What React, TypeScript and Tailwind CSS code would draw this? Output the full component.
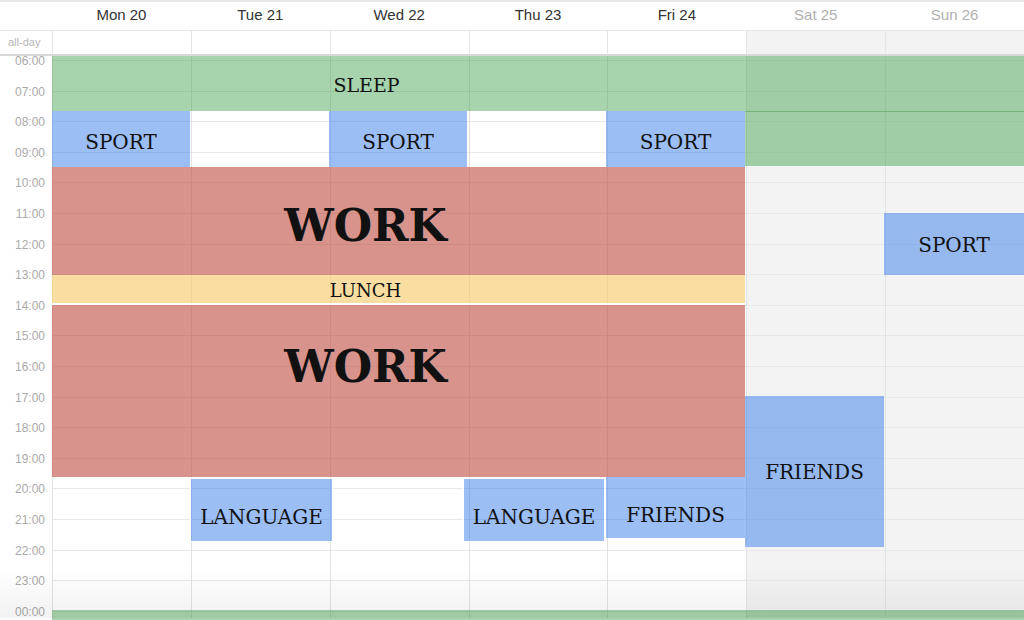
import React from "react"

const days = [
  { label: "Mon 20", weekend: false },
  { label: "Tue 21", weekend: false },
  { label: "Wed 22", weekend: false },
  { label: "Thu 23", weekend: false },
  { label: "Fri 24", weekend: false },
  { label: "Sat 25", weekend: true },
  { label: "Sun 26", weekend: true },
]

const hours = ["06:00", "07:00", "08:00", "09:00", "10:00", "11:00", "12:00", "13:00", "14:00", "15:00", "16:00", "17:00", "18:00", "19:00", "20:00", "21:00", "22:00", "23:00", "00:00"]

type Ev = { label?: string; left: number; top: number; width: number; height: number; cls: string; text?: string }

const green = "bg-[rgba(60,160,70,0.45)]"
const blue = "bg-[rgba(66,133,234,0.53)]"
const red = "bg-[rgba(190,80,70,0.62)]"

const events: Ev[] = [
  { label: "SLEEP", left: 52, top: 0, width: 693, height: 55, cls: `${green} pr-[64px] pt-[3px]`, text: "text-[19px]" },
  { left: 745, top: 0, width: 279, height: 55, cls: green },
  { left: 745, top: 55, width: 279, height: 55, cls: `${green} border-t border-[rgba(40,130,50,0.35)]` },
  { label: "SPORT", left: 52, top: 55, width: 138, height: 56, cls: `${blue} pt-[6px]`, text: "text-[20px]" },
  { label: "SPORT", left: 329, top: 55, width: 138, height: 56, cls: `${blue} pt-[6px]`, text: "text-[20px]" },
  { label: "SPORT", left: 606, top: 55, width: 139, height: 56, cls: `${blue} pt-[6px]`, text: "text-[20px]" },
  { label: "SPORT", left: 884, top: 157, width: 140, height: 62, cls: `${blue} pt-[1px]`, text: "text-[20px]" },
  { label: "WORK", left: 52, top: 111, width: 693, height: 108, cls: `${red} pr-[66px] pt-[10px]`, text: "text-[44px] font-bold" },
  { label: "LUNCH", left: 52, top: 219, width: 693, height: 30, cls: "bg-[rgba(247,205,110,0.65)] border-b-2 border-white pr-[66px] pt-[3px]", text: "text-[18px]" },
  { label: "WORK", left: 52, top: 249, width: 693, height: 172, cls: `${red} pr-[66px] pb-[48px]`, text: "text-[44px] font-bold" },
  { label: "LANGUAGE", left: 190, top: 422, width: 143, height: 64, cls: `${blue} border border-white pt-[13px]`, text: "text-[20px]" },
  { label: "LANGUAGE", left: 463, top: 422, width: 142, height: 64, cls: `${blue} border border-white pt-[13px]`, text: "text-[20px]" },
  { label: "FRIENDS", left: 606, top: 421, width: 139, height: 61, cls: `${blue} pt-[15px]`, text: "text-[20px]" },
  { label: "FRIENDS", left: 745, top: 340, width: 139, height: 151, cls: `${blue} pt-[1px]`, text: "text-[20px]" },
  { left: 52, top: 554, width: 972, height: 12, cls: green },
]

export default function App() {
  return (
    <div className="relative w-[1024px] h-[620px] overflow-hidden bg-white font-['Liberation_Sans',sans-serif]">
      {/* header */}
      <div className="flex h-[31px] border-b border-[#e6e6e6] border-t-2 border-t-[#e8e8e8]">
        <div className="w-[52px]" />
        {days.map((d) => (
          <div
            key={d.label}
            className={`flex-1 flex items-center justify-center pb-[1px] text-[15px] ${d.weekend ? "text-[#b0b0b0]" : "text-[#333]"}`}
          >
            {d.label}
          </div>
        ))}
      </div>

      {/* all-day */}
      <div className="flex h-[25px] border-b-2 border-[#d8d8d8]">
        <div className="w-[52px] flex items-center pl-[8px] text-[11px] text-[#b5b5b5]">all-day</div>
        {days.map((d) => (
          <div key={d.label} className={`flex-1 border-l border-[#e6e6e6] ${d.weekend ? "bg-[#f3f3f3]" : ""}`} />
        ))}
      </div>

      {/* body */}
      <div className="relative flex h-[562px]">
        <div className="w-[52px] pt-[4px]">
          {hours.map((h) => (
            <div key={h} className="h-[30.6px] flex justify-end pr-[7px]">
              <span className="-mt-[6px] text-[12px] leading-[15px] text-[#aaa]">{h}</span>
            </div>
          ))}
        </div>
        {days.map((d) => (
          <div key={d.label} className={`flex-1 border-l border-[#e2e2e2] pt-[4px] ${d.weekend ? "bg-[#f3f3f3]" : ""}`}>
            {hours.map((h) => (
              <div key={h} className="h-[30.6px] border-t border-[#e8e8e8]" />
            ))}
          </div>
        ))}

        {events.map((e, i) => (
          <div
            key={i}
            className={`absolute box-border flex items-center justify-center ${e.cls}`}
            style={{ left: e.left, top: e.top, width: e.width, height: e.height }}
          >
            {e.label && (
              <span className={`font-['DejaVu_Serif',serif] text-[#111] leading-none ${e.text}`}>{e.label}</span>
            )}
          </div>
        ))}

        <div className="pointer-events-none absolute left-0 right-0 bottom-0 h-[50px] bg-gradient-to-b from-transparent to-[rgba(0,0,0,0.05)]" />
      </div>
    </div>
  )
}
